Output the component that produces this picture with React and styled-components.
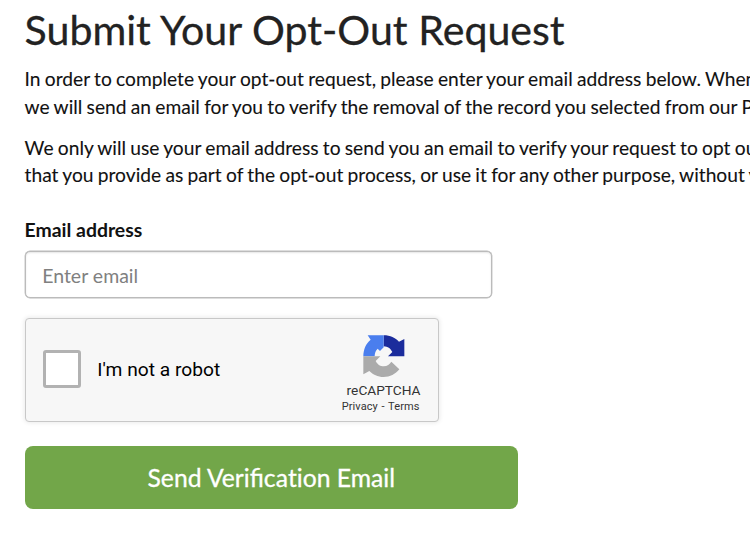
import React from "react";
import styled, { createGlobalStyle } from "styled-components";

const GlobalStyle = createGlobalStyle`
  *, *::before, *::after {
    box-sizing: border-box;
  }

  body {
    margin: 0;
    background: #fff;
    color: #111;
    font-family: Lato, sans-serif;
    font-size: 19.2px;
    line-height: 27.4px;
    overflow: hidden;
  }
`;

const Page = styled.main`
  height: 535px;
  padding: 7px 0 0 24.6px;
  overflow: hidden;
`;

const Title = styled.h1`
  margin: 0 0 13.4px;
  font-size: 41.1px;
  font-weight: 400;
  line-height: 45px;
  word-spacing: 0.2px;
  color: #222;
  -webkit-text-stroke: 0.3px currentColor;
`;

const Paragraph = styled.p`
  margin: 0 0 13.5px;
  word-spacing: -0.62px;
  white-space: nowrap;
  -webkit-text-stroke: 0.1px currentColor;
`;

const Form = styled.form`
  display: flex;
  flex-direction: column;
  align-items: flex-start;
  padding-top: 14px;
`;

const Label = styled.label`
  margin-bottom: 7.6px;
  font-size: 19.4px;
  font-weight: 700;
`;

const Input = styled.input`
  width: 467.4px;
  height: 46.6px;
  margin-bottom: 20.6px;
  padding: 2px 16px 0 16.6px;
  border: 1.4px solid #bbb;
  border-radius: 5px;
  background: #fff;
  box-shadow: inset 0 1px 2px rgb(0 0 0 / 0.1), 0 0 0 0.4px #bbb;
  font: inherit;
  font-size: 19.5px;
  color: #555;

  &::placeholder {
    color: #808080;
    opacity: 1;
  }
`;

const Captcha = styled.div`
  display: flex;
  align-items: center;
  width: 414px;
  height: 104px;
  margin-bottom: 23.4px;
  padding: 0 0 2px 17px;
  border: 1.4px solid #c8c8c8;
  border-radius: 4px;
  background: #f7f7f7;
  box-shadow: 0 0 4px 1px rgb(0 0 0 / 0.08);
  font-family: Roboto, sans-serif;
  color: #000;
`;

const CheckBox = styled.span`
  width: 38.4px;
  height: 38.4px;
  border: 3px solid #b2b2b2;
  border-radius: 3px;
  background: #fff;
`;

const CaptchaLabel = styled.span`
  margin-left: 16.2px;
  font-size: 19.2px;
`;

const CaptchaBrand = styled.div`
  display: flex;
  flex-direction: column;
  align-items: center;
  width: 84px;
  margin: 0 15px 0 auto;
  padding-top: 10px;
  color: #333;
`;

const BrandName = styled.span`
  margin: 5px 0 0 6px;
  font-size: 13.7px;
  line-height: 17px;
`;

const BrandLinks = styled.span`
  font-size: 11px;
  line-height: 15px;
  letter-spacing: 0.1px;
  word-spacing: 0.8px;
  white-space: pre;
`;

const SubmitButton = styled.button`
  width: 493.4px;
  height: 63px;
  padding: 0;
  border: 0;
  border-radius: 8px;
  background: #72a649;
  color: #fff;
  font-family: inherit;
  font-size: 24.7px;
  -webkit-text-stroke: 0.3px currentColor;
`;

const Unjoined = styled.span`
  font-variant-ligatures: none;
`;

const Logo = styled.svg`
  margin-left: 7px;
`;

function CaptchaLogo() {
  return (
    <Logo width="42" height="42" viewBox="0 0 126 126" aria-hidden="true">
      <path
        fill="#1b2c9c"
        d="M62 1C82 1 97 9 108 20L124 12V64H75L88 51C82 40 75 35 62 34Z"
      />
      <path
        fill="#4a7eee"
        d="M62 1H14L23 14C9 25 1 43 1 64H35C35 54 38 46 44 41L51 48L62 37Z"
      />
      <path
        fill="#ababab"
        d="M1 64H52L38 78C45 90 52 94 62 94C73 94 80 88 85 80L109 103C97 118 81 126 62 126C44 126 30 119 19 108L1 118Z"
      />
    </Logo>
  );
}

export default function App() {
  return (
    <>
      <GlobalStyle />
      <Page>
        <Title>Submit Your Opt-Out Request</Title>
        <Paragraph>
          In order to complete your opt-out request, please enter your email
          address below. When
          <br />
          we will send an email for you to verify the removal of the record you
          selected from our P
        </Paragraph>
        <Paragraph>
          We only will use your email address to send you an email to verify
          your request to opt out
          <br />
          that you provide as part of the opt-out process, or use it for any
          other purpose, without y
        </Paragraph>
        <Form onSubmit={(e) => e.preventDefault()}>
          <Label htmlFor="email">Email address</Label>
          <Input id="email" type="email" placeholder="Enter email" />
          <Captcha>
            <CheckBox role="checkbox" aria-checked="false" />
            <CaptchaLabel>I'm not a robot</CaptchaLabel>
            <CaptchaBrand>
              <CaptchaLogo />
              <BrandName>reCAPTCHA</BrandName>
              <BrandLinks>Privacy - Terms</BrandLinks>
            </CaptchaBrand>
          </Captcha>
          <SubmitButton type="submit">
            Send Verifica<Unjoined>ti</Unjoined>on Email
          </SubmitButton>
        </Form>
      </Page>
    </>
  );
}
